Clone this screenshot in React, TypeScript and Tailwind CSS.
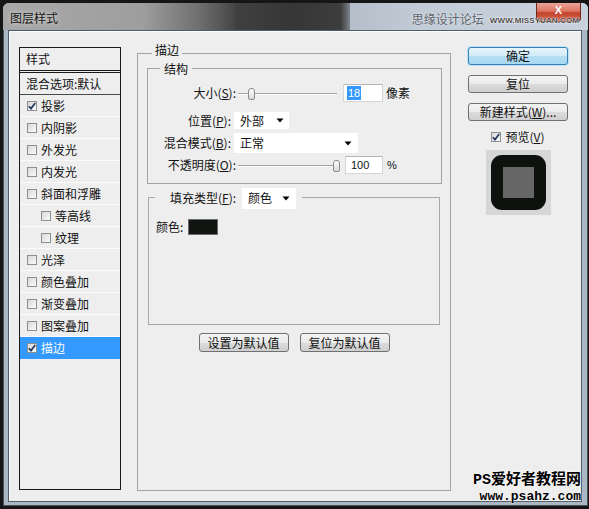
import React from 'react';

type Item = { label: string; checked?: boolean; indent?: boolean; selected?: boolean };

const ITEMS: Item[] = [
  { label: '投影', checked: true },
  { label: '内阴影' },
  { label: '外发光' },
  { label: '内发光' },
  { label: '斜面和浮雕' },
  { label: '等高线', indent: true },
  { label: '纹理', indent: true },
  { label: '光泽' },
  { label: '颜色叠加' },
  { label: '渐变叠加' },
  { label: '图案叠加' },
  { label: '描边', checked: true, selected: true },
];

function Check({ checked }: { checked?: boolean }) {
  return (
    <span className="flex h-[10px] w-[10px] shrink-0 items-center justify-center border border-[#8e8f8f] bg-[#f0f0f0] bg-[linear-gradient(135deg,#d8d8d8,#fbfbfb)]">
      {checked && (
        <svg width="8" height="8" viewBox="0 0 8 8">
          <path d="M0.8 4.2 L3 6.6 L7.2 1" fill="none" stroke="#26355f" strokeWidth="1.7" />
        </svg>
      )}
    </span>
  );
}

function Caret() {
  return (
    <svg width="8" height="5" viewBox="0 0 8 5">
      <path d="M0.5 0.5 H7.5 L4 4.5 Z" fill="#000" />
    </svg>
  );
}

function Slider({ pos }: { pos: number }) {
  return (
    <div className="relative ml-[2px] h-[13px] w-[99px]">
      <div className="absolute left-0 right-0 top-[6px] h-[2px] border-t border-[#a3a3a3] bg-[#fafafa]" />
      <div
        className="absolute top-[1px] h-[12px] w-[7px] rounded-t-[3px] rounded-b-[2px] border border-[#8c8c8c] bg-[#ececec] bg-[linear-gradient(180deg,#fdfdfd,#d9d9d9)]"
        style={{ left: pos }}
      />
    </div>
  );
}

function Btn({ children, className = '' }: { children: React.ReactNode; className?: string }) {
  return (
    <div
      className={`flex items-center justify-center rounded-[3px] border border-[#707070] bg-[#e4e4e4] bg-[linear-gradient(180deg,#f4f4f4_0%,#ebebeb_50%,#dcdcdc_51%,#cfcfcf_100%)] text-[12px] text-[#111] ${className}`}
    >
      {children}
    </div>
  );
}

export default function App() {
  return (
    <div className="relative h-[509px] w-[589px] overflow-hidden bg-[#161616] pl-[3px] pr-[1px] pt-[3px] font-['Noto_Sans_CJK_SC','Noto_Sans',sans-serif] text-[12px] text-[#111]">
      <div className="flex h-[503px] flex-col rounded-t-[6px] bg-[#aab7c5] shadow-[inset_0_0_0_1px_#4a525c]">
        {/* title bar: glass over a dark desktop, so three tone segments */}
        <div className="flex h-[27px] shrink-0 overflow-hidden rounded-t-[6px]">
          <div className="w-[232px] shrink-0 bg-[#9c9c9c] bg-[linear-gradient(90deg,#a8a8a8_0%,#9e9e9e_60%,#6e6e6e_85%,#454545_100%)] pl-[7px] pt-[6px]">
            <span className="leading-[18px] text-[#151515] [text-shadow:0_0_4px_#e6e6e6]">图层样式</span>
          </div>
          <div className="w-[115px] shrink-0 bg-[#393939] bg-[linear-gradient(90deg,#404040_0%,#363636_50%,#3d3d3d_92%,#7d858d_100%)]" />
          <div className="relative flex flex-1 bg-[#c2ccd7] bg-[linear-gradient(90deg,#b3bec9_0%,#c2ccd7_30%,#c8d2dc_100%)]">
            <div className="ml-auto mr-[7px] flex h-[19px] w-[45px] justify-center rounded-b-[4px] border border-t-0 border-[#6b2a20] bg-[#cf5a45] bg-[linear-gradient(180deg,#eaa598_0%,#dc7462_45%,#c4412b_55%,#d26b53_100%)] pt-[2px]">
              <span className="font-['Liberation_Sans',sans-serif] text-[11px] font-bold leading-[11px] text-white">X</span>
            </div>
            <div className="absolute right-[9px] top-[9px] flex items-end gap-[6px]">
              <span className="text-[12px] leading-[14px] text-[#5c636c] [text-shadow:0_0_2px_#f2f2f2]">思缘设计论坛</span>
              <span className="font-['Liberation_Sans',sans-serif] text-[8px] font-bold leading-[11px] tracking-[0.1px] text-[#4d4d4d] [text-shadow:0_0_2px_#ffffff,0_0_1px_#ffffff]">
                WWW.MISSYUAN.COM
              </span>
            </div>
          </div>
        </div>

        {/* dialog content */}
        <div className="ml-[5px] mr-[6px] flex h-[472px] items-start border border-[#505c68] bg-[#eeeeee] pl-[10px] pt-[16px] shadow-[inset_1px_1px_0_#fdfdfd]">
          {/* style list */}
          <div className="flex h-[443px] w-[102px] shrink-0 flex-col border border-[#1a1a1a]">
            <div className="flex h-[25px] items-start border-b-[3px] border-double border-[#1a1a1a] pl-[6px] pt-[2px] leading-[18px]">
              样式
            </div>
            <div className="flex h-[22px] items-center border-b border-[#4a4a4a] pl-[6px] leading-[16px]">混合选项:默认</div>
            {ITEMS.map((it) => (
              <div
                key={it.label}
                className={`flex h-[22px] items-center gap-[4px] border-b leading-[16px] ${it.indent ? 'pl-[21px]' : 'pl-[7px]'} ${
                  it.selected ? 'border-[#3399ff] bg-[#3399ff] text-white' : 'border-[#fbfbfb]'
                }`}
              >
                <Check checked={it.checked} />
                <span>{it.label}</span>
              </div>
            ))}
          </div>

          {/* stroke group */}
          <div className="ml-[16px] mt-[6px] flex h-[438px] w-[314px] shrink-0 flex-col border border-[#a2a2a2]">
            <div className="-mt-[12px] ml-[14px] h-[16px] w-fit bg-[#eeeeee] px-[3px] leading-[16px]">描边</div>

            <div className="ml-[9px] mr-[8px] mt-[10px] flex flex-col border border-[#a2a2a2] pb-[9px]">
              <div className="-mt-[7px] ml-[12px] h-[14px] w-fit bg-[#eeeeee] px-[4px] leading-[14px]">结构</div>

              <div className="mt-[8px] flex h-[18px] items-center">
                <span className="w-[88px] text-right leading-[16px]">
                  大小(<u>S</u>):
                </span>
                <Slider pos={10} />
                <div className="ml-[6px] flex h-[18px] w-[40px] items-center border border-[#d6d6d6] border-t-[#b5b5b5] bg-white pl-[3px] font-['Liberation_Sans',sans-serif] text-[11px]">
                  <span className="bg-[#3399ff] px-[1px] leading-[14px] text-white">18</span>
                </div>
                <span className="ml-[3px] leading-[16px]">像素</span>
              </div>

              <div className="mt-[10px] flex h-[17px] items-center">
                <span className="w-[83px] text-right leading-[16px]">
                  位置(<u>P</u>):
                </span>
                <div className="ml-[3px] flex h-[17px] w-[55px] items-center justify-between bg-white pl-[6px] pr-[5px] leading-[16px]">
                  <span>外部</span>
                  <Caret />
                </div>
              </div>

              <div className="mt-[4px] flex h-[20px] items-center">
                <span className="w-[83px] text-right leading-[16px]">
                  混合模式(<u>B</u>):
                </span>
                <div className="ml-[3px] flex h-[20px] w-[124px] items-center justify-between bg-white pl-[6px] pr-[6px] leading-[16px]">
                  <span>正常</span>
                  <Caret />
                </div>
              </div>

              <div className="mt-[3px] flex h-[18px] items-center">
                <span className="w-[88px] text-right leading-[16px]">
                  不透明度(<u>O</u>):
                </span>
                <Slider pos={95} />
                <div className="ml-[8px] flex h-[18px] w-[38px] items-center border border-[#d6d6d6] border-t-[#b5b5b5] bg-white pl-[5px] font-['Liberation_Sans',sans-serif] text-[11px] leading-[14px]">
                  100
                </div>
                <span className="ml-[4px] font-['Liberation_Sans',sans-serif] text-[11px]">%</span>
              </div>
            </div>

            <div className="ml-[10px] mr-[10px] mt-[13px] flex h-[128px] flex-col border border-[#a8a8a8]">
              <div className="-mt-[11px] ml-[6px] flex h-[22px] w-fit items-center bg-[#eeeeee] pl-[15px] pr-[6px]">
                <span className="leading-[16px]">
                  填充类型(<u>F</u>):
                </span>
                <div className="ml-[6px] flex h-[21px] w-[54px] items-center justify-between bg-white pl-[6px] pr-[6px] leading-[16px]">
                  <span>颜色</span>
                  <Caret />
                </div>
              </div>
              <div className="mt-[10px] flex h-[16px] items-center pl-[7px]">
                <span className="leading-[16px]">颜色:</span>
                <div className="ml-[5px] h-[16px] w-[30px] border border-[#6c6c6c] bg-[#111511]" />
              </div>
            </div>

            <div className="mt-[8px] flex justify-center gap-[11px]">
              <Btn className="h-[19px] w-[90px]">设置为默认值</Btn>
              <Btn className="h-[19px] w-[90px]">复位为默认值</Btn>
            </div>
          </div>

          {/* right buttons */}
          <div className="ml-[17px] flex w-[100px] shrink-0 flex-col items-center">
            <div className="flex h-[18px] w-full items-center justify-center rounded-[3px] border border-[#3c7fb1] bg-[#c4e6f7] bg-[linear-gradient(180deg,#e6f5fc_0%,#d2ecf9_50%,#b6e0f5_51%,#a7d8f2_100%)] shadow-[0_0_0_1px_#b9e4f8] text-[12px]">
              确定
            </div>
            <Btn className="mt-[10px] h-[18px] w-full">复位</Btn>
            <Btn className="mt-[10px] h-[18px] w-full">
              <span>
                新建样式(<u>W</u>)...
              </span>
            </Btn>
            <div className="mt-[10px] flex h-[12px] items-center gap-[4px]">
              <Check checked />
              <span className="leading-[14px]">
                预览(<u>V</u>)
              </span>
            </div>
            <div className="mt-[7px] flex h-[65px] w-[65px] items-center justify-center bg-[#d6d6d6]">
              <div className="flex h-[55px] w-[55px] items-center justify-center rounded-[11px] bg-[#0e120e]">
                <div className="h-[31px] w-[31px] bg-[#666666]" />
              </div>
            </div>
          </div>
        </div>
      </div>

      {/* site watermark */}
      <div className="absolute bottom-[5px] right-[8px] flex flex-col items-end font-['Liberation_Mono','Noto_Sans_CJK_SC',monospace] font-bold text-black [text-shadow:0_0_2px_#fff,0_0_1px_#fff]">
        <span className="text-[15px] leading-[16px]">PS爱好者教程网</span>
        <span className="text-[13px] leading-[15px]">www.psahz.com</span>
      </div>
    </div>
  );
}
